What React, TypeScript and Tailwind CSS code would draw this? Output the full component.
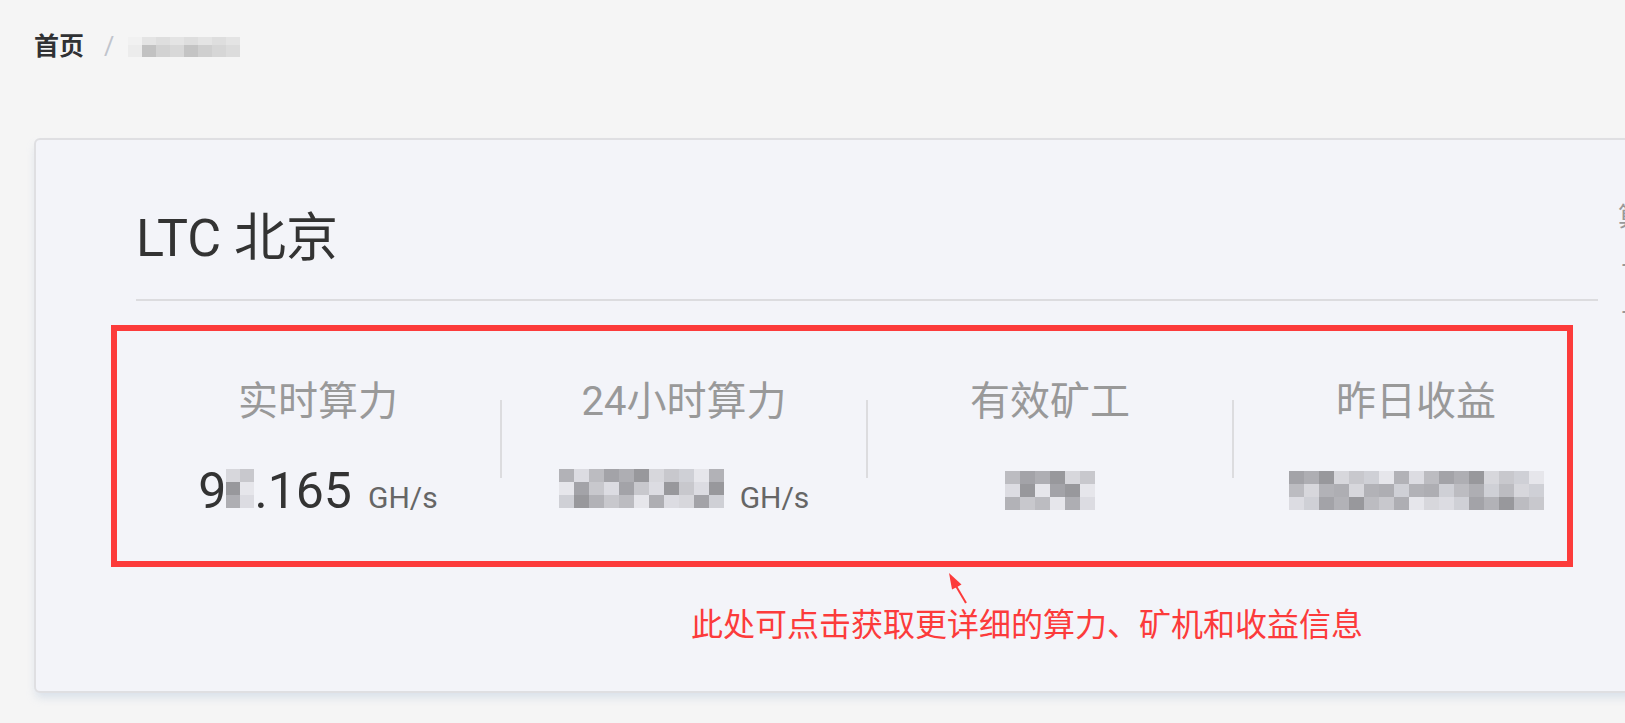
import React from 'react';

const SHADES = ['#c8c8cd', '#b2b2b7', '#a3a3a8', '#d7d7dc', '#e6e6eb', '#bcbcc1', '#98989c', '#cfd0d6', '#dcdce2', '#aeaeb3'];

type BlurProps = {
  cols: number;
  rows: number;
  seed?: number;
  cellClass?: string;
};

// pixelated placeholder for hidden numbers
function Blur({ cols, rows, seed = 0, cellClass = 'w-[15px] h-[13px]' }: BlurProps) {
  const cells = [];
  for (let r = 0; r < rows; r++) {
    for (let c = 0; c < cols; c++) {
      const shade = SHADES[(c * 7 + r * 3 + seed + ((c * r) % 4)) % SHADES.length];
      cells.push(<div key={`${r}-${c}`} className={cellClass} style={{ backgroundColor: shade }} />);
    }
  }
  return (
    <span className="inline-block overflow-hidden align-baseline">
      <span className="grid" style={{ gridTemplateColumns: `repeat(${cols}, auto)` }}>
        {cells}
      </span>
    </span>
  );
}

type Stat = {
  label: string;
  value: React.ReactNode;
  unit?: string;
};

const stats: Stat[] = [
  {
    label: '实时算力',
    value: (
      <>
        9
        <Blur cols={2} rows={3} seed={3} cellClass="w-[14px] h-[13px]" />
        .165
      </>
    ),
    unit: 'GH/s',
  },
  { label: '24小时算力', value: <Blur cols={11} rows={3} seed={1} />, unit: 'GH/s' },
  { label: '有效矿工', value: <span className="relative top-[2px]"><Blur cols={6} rows={3} seed={5} /></span> },
  { label: '昨日收益', value: <span className="relative top-[2px]"><Blur cols={17} rows={3} seed={2} /></span> },
];

function StatColumn({ stat }: { stat: Stat }) {
  return (
    <div className="flex-1 flex flex-col items-center pt-[77px]">
      <div className="text-[40px] leading-[48px] text-[#999999]">{stat.label}</div>
      <div className="mt-[40px] h-[50px] leading-[50px] whitespace-nowrap">
        <span className="text-[50px] text-[#333333]">{stat.value}</span>
        {stat.unit && <span className="ml-[16px] text-[30px] text-[#666666]">{stat.unit}</span>}
      </div>
    </div>
  );
}

export default function App() {
  return (
    <div className="h-[723px] w-full overflow-hidden bg-[#f5f5f5] font-['Roboto','Noto_Sans_CJK_SC',sans-serif]">
      {/* Breadcrumb */}
      <div className="pl-[34px] pt-[30px]">
        <div className="h-[34px] flex items-center text-[25px]">
          <span className="font-bold text-[#303133]">首页</span>
          <span className="ml-[20px] mr-[14px] text-[#c0c4cc]">/</span>
          <span className="inline-flex flex-col">
            <span className="flex">
              {[0, 1, 2, 3, 4, 5, 6, 7].map((i) => (
                <span key={i} className="w-[14px] h-[8px]" style={{ backgroundColor: i === 0 ? '#f1f1f1' : i % 2 ? '#e4e4e4' : '#dedede' }} />
              ))}
            </span>
            <span className="flex">
              {[0, 1, 2, 3, 4, 5, 6, 7].map((i) => (
                <span key={i} className="w-[14px] h-[12px]" style={{ backgroundColor: ['#ececec', '#c2c2c2', '#d2d2d2', '#d8d8d8', '#c4c4c4', '#cfcfcf', '#d6d6d6', '#dcdcdc'][i] }} />
              ))}
            </span>
          </span>
        </div>
      </div>

      {/* Card */}
      <div className="relative ml-[34px] mt-[74px] w-[1800px] h-[555px] rounded-[6px] border-2 border-[#dfdfe2] bg-[#f3f4f9] shadow-[0_6px_10px_-2px_rgba(170,190,215,0.4)]">
        <div className="flex pl-[100px]">
          {/* Main section */}
          <div className="w-[1462px]">
            <div className="pt-[72px] pb-[33px] border-b-2 border-[#dcdcdf]">
              <h1 className="text-[52px] leading-[54px] text-[#333333]">LTC 北京</h1>
            </div>
            <div className="flex">
              {stats.map((stat, i) => (
                <React.Fragment key={stat.label}>
                  {i > 0 && <div className="w-[2px] h-[78px] mt-[99px] bg-[#dcdcdf]" />}
                  <StatColumn stat={stat} />
                </React.Fragment>
              ))}
            </div>
          </div>

          {/* Side section, cut off by the window */}
          <div className="ml-[20px] pt-[62px] text-[26px] leading-[30px] text-[#999999] whitespace-nowrap">
            <div>算力图表</div>
            <div className="mt-[17px] pl-[4px]">-</div>
            <div className="mt-[17px] pl-[4px]">-</div>
          </div>
        </div>

        {/* Annotation overlay */}
        <div className="absolute left-[75px] top-[185px] w-[1462px] h-[242px] border-[6px] border-[#fc3b3b]" />
        <svg className="absolute left-[909px] top-[430px]" width="26" height="36" viewBox="0 0 26 36">
          <polygon points="4,3 16.5,14.5 13,16.5 7,19.5" fill="#fc3b3b" />
          <line x1="11" y1="16" x2="21" y2="33" stroke="#fc3b3b" strokeWidth="2" />
        </svg>
        <div className="absolute left-[655px] top-[465px] text-[32px] leading-[40px] text-[#fc3b3b] font-['Liberation_Serif','Noto_Sans_CJK_SC',serif] whitespace-nowrap">
          此处可点击获取更详细的算力、矿机和收益信息
        </div>
      </div>
    </div>
  );
}
